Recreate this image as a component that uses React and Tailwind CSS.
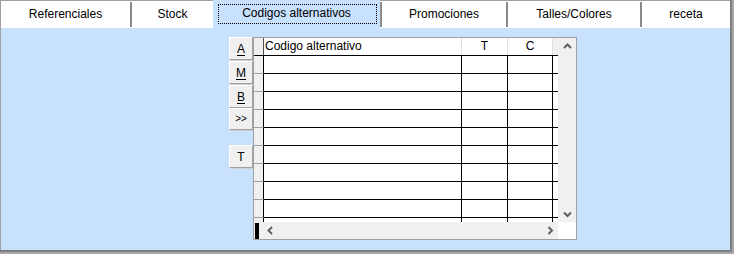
import React from "react";

const font = { fontFamily: '"Liberation Sans", Arial, sans-serif' };

function Tab({ label, width, selected, sep }) {
  if (selected) {
    return (
      <div className={`${width} h-[28px] bg-[#c8e1fd] flex items-start pt-[4px] justify-center relative`}>
        <div className="absolute left-[5px] right-[3px] top-[4px] h-[20px] border border-dotted border-black" />
        <span className="text-[12px] leading-[18px] text-black">{label}</span>
      </div>
    );
  }
  return (
    <div className={`${width} h-[28px] flex`}>
      {sep && <div className="w-[2px] h-full border-t border-[#a0a0a0] bg-white flex flex-col"><div className="mt-[1px] h-[25px] bg-[#8a8a8a]" /></div>}
      <div className="flex-1 h-full bg-white border-t border-[#a0a0a0] flex items-start justify-center pt-[4px]">
        <span className="text-[12px] leading-[18px] text-black">{label}</span>
      </div>
    </div>
  );
}

function Btn({ children, top, h, u = true, small }) {
  return (
    <div
      className={`${top} ${h} w-[24px] bg-[#f0f0f0] border-t border-l border-white border-r border-b border-r-[#a0a0a0] border-b-[#a0a0a0] shadow-[1px_1px_0_#cfcfcf] flex items-center justify-center`}
    >
      <span className={`${small ? "text-[10px]" : "text-[12px]"} leading-none text-black ${u ? "underline underline-offset-2" : ""}`}>
        {children}
      </span>
    </div>
  );
}

function Chevron({ dir }) {
  const pts = {
    up: "1,5 4.5,1.5 8,5",
    down: "1,1.5 4.5,5 8,1.5",
    left: "5,1 1.5,4.5 5,8",
    right: "1.5,1 5,4.5 1.5,8",
  }[dir];
  const vert = dir === "up" || dir === "down";
  return (
    <svg width={vert ? 9 : 7} height={vert ? 7 : 9} viewBox={vert ? "0 0 9 7" : "0 0 7 9"}>
      <polyline points={pts} fill="none" stroke="#606060" strokeWidth="2" />
    </svg>
  );
}

function DataRow({ last }) {
  const line = last ? "" : "border-b border-black";
  return (
    <div className={`flex ${last ? "h-[4px]" : "h-[18px]"}`}>
      <div className={`w-[10px] h-full bg-[#f0f0f0] border-r border-r-black ${last ? "" : "border-b border-b-[#a0a0a0]"}`} />
      <div className={`w-[198px] h-full border-r border-r-black ${line}`} />
      <div className={`w-[46px] h-full border-r border-r-black ${line}`} />
      <div className={`w-[45px] h-full border-r border-r-black ${line}`} />
      <div className={`w-[5px] h-full ${line}`} />
    </div>
  );
}

export default function App() {
  const tabs = [
    { label: "Referenciales", width: "w-[129px]" },
    { label: "Stock", width: "w-[83px]", sep: true },
    { label: "Codigos alternativos", width: "w-[167px]", selected: true },
    { label: "Promociones", width: "w-[126px]", sep: true },
    { label: "Talles/Colores", width: "w-[134px]", sep: true },
    { label: "receta", width: "w-[90px]", sep: true },
  ];
  return (
    <div style={font} className="w-[734px] h-[254px] bg-[#a8a8a8] pr-[2px] pb-[2px]">
      <div className="w-[732px] h-[252px] border-r-2 border-b-2 border-[#7e7e7e] flex flex-col">
        <div className="flex-1 flex flex-col border-l border-[#a0a0a0] bg-[#c8e1fd]">
          <div className="flex h-[28px]">
            {tabs.map((t) => (
              <Tab key={t.label} {...t} />
            ))}
          </div>
          <div className="flex pl-[228px] pt-[9px]">
            <div className="w-[24px] flex flex-col">
              <Btn top="mt-0" h="h-[23px]">A</Btn>
              <Btn top="mt-[1px]" h="h-[23px]">M</Btn>
              <Btn top="mt-[1px]" h="h-[23px]">B</Btn>
              <Btn top="mt-0" h="h-[22px]" u={false} small>&gt;&gt;</Btn>
              <Btn top="mt-[15px]" h="h-[23px]" u={false}>T</Btn>
            </div>
            <div className="w-[324px] h-[203px] border border-[#a0a0a0] bg-white flex">
              <div className="w-[304px] flex flex-col">
                <div className="h-[184px] flex flex-col">
                  <div className="flex h-[18px] border-b border-black">
                    <div className="w-[10px] h-full bg-[#f0f0f0] border-r border-r-[#505050]" />
                    <div className="w-[198px] h-full border-r border-r-[#e0e0e0] pl-[1px] text-[12px] leading-[17px] text-black">
                      Codigo alternativo
                    </div>
                    <div className="w-[46px] h-full border-r border-r-[#e0e0e0] text-center text-[12px] leading-[17px] text-black">T</div>
                    <div className="w-[45px] h-full border-r border-r-[#e0e0e0] text-center text-[12px] leading-[17px] text-black">C</div>
                    <div className="w-[5px] h-full bg-[#f0f0f0]" />
                  </div>
                  {Array.from({ length: 9 }).map((_, i) => (
                    <DataRow key={i} />
                  ))}
                  <DataRow last />
                </div>
                <div className="h-[17px] bg-[#f0f0f0] flex items-center">
                  <div className="w-[4px] h-[16px] bg-black ml-[1px]" />
                  <div className="ml-[8px] flex items-center"><Chevron dir="left" /></div>
                  <div className="flex-1" />
                  <div className="mr-[4px] flex items-center"><Chevron dir="right" /></div>
                </div>
              </div>
              <div className="w-[18px] flex flex-col">
                <div className="h-[184px] bg-[#f0f0f0] flex flex-col items-center justify-between pt-[5px] pb-[4px]">
                  <Chevron dir="up" />
                  <Chevron dir="down" />
                </div>
                <div className="h-[17px] bg-white" />
              </div>
            </div>
          </div>
        </div>
      </div>
    </div>
  );
}
